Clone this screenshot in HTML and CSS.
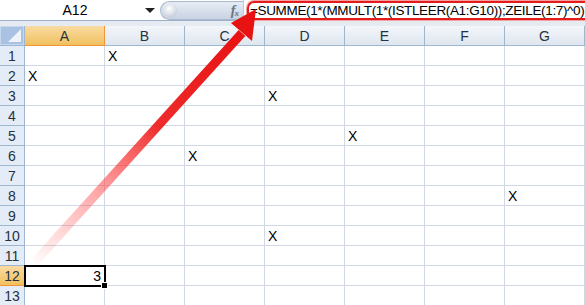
FILE: index.html
```html
<!DOCTYPE html>
<html>
<head>
<meta charset="utf-8">
<link rel="stylesheet" href="styles.css">
</head>
<body>
<div class="app">
  <div class="fbar">
    <div class="namebox"><span class="name">A12</span><span class="dd"></span></div>
    <div class="pill"><span class="knob"></span><span class="fx">f<sub>x</sub></span></div>
    <div class="formula"><span class="ftext">=SUMME(1*(MMULT(1*(ISTLEER(A1:G10));ZEILE(1:7)^0)</span></div>
  </div>
  <div class="sep"></div>
  <div class="sheet">
    <div class="corner"><span class="tri"></span></div>
    <div class="ch sel">A</div><div class="ch">B</div><div class="ch">C</div><div class="ch">D</div><div class="ch">E</div><div class="ch">F</div><div class="ch">G</div>

    <div class="rh">1</div><div class="c"></div><div class="c">X</div><div class="c"></div><div class="c"></div><div class="c"></div><div class="c"></div><div class="c"></div>
    <div class="rh">2</div><div class="c">X</div><div class="c"></div><div class="c"></div><div class="c"></div><div class="c"></div><div class="c"></div><div class="c"></div>
    <div class="rh">3</div><div class="c"></div><div class="c"></div><div class="c"></div><div class="c">X</div><div class="c"></div><div class="c"></div><div class="c"></div>
    <div class="rh">4</div><div class="c"></div><div class="c"></div><div class="c"></div><div class="c"></div><div class="c"></div><div class="c"></div><div class="c"></div>
    <div class="rh">5</div><div class="c"></div><div class="c"></div><div class="c"></div><div class="c"></div><div class="c">X</div><div class="c"></div><div class="c"></div>
    <div class="rh">6</div><div class="c"></div><div class="c"></div><div class="c">X</div><div class="c"></div><div class="c"></div><div class="c"></div><div class="c"></div>
    <div class="rh">7</div><div class="c"></div><div class="c"></div><div class="c"></div><div class="c"></div><div class="c"></div><div class="c"></div><div class="c"></div>
    <div class="rh">8</div><div class="c"></div><div class="c"></div><div class="c"></div><div class="c"></div><div class="c"></div><div class="c"></div><div class="c">X</div>
    <div class="rh">9</div><div class="c"></div><div class="c"></div><div class="c"></div><div class="c"></div><div class="c"></div><div class="c"></div><div class="c"></div>
    <div class="rh">10</div><div class="c"></div><div class="c"></div><div class="c"></div><div class="c">X</div><div class="c"></div><div class="c"></div><div class="c"></div>
    <div class="rh">11</div><div class="c"></div><div class="c"></div><div class="c"></div><div class="c"></div><div class="c"></div><div class="c"></div><div class="c"></div>
    <div class="rh sel">12</div><div class="c active">3<span class="handle"></span></div><div class="c"></div><div class="c"></div><div class="c"></div><div class="c"></div><div class="c"></div><div class="c"></div>
    <div class="rh">13</div><div class="c"></div><div class="c"></div><div class="c"></div><div class="c"></div><div class="c"></div><div class="c"></div><div class="c"></div>
  </div>
  <svg class="arrow" width="585" height="305" viewBox="0 0 585 305">
    <defs>
      <linearGradient id="g" gradientUnits="userSpaceOnUse" x1="32" y1="265" x2="242" y2="33">
        <stop offset="0" stop-color="#ff4040" stop-opacity="0"/>
        <stop offset="0.3" stop-color="#f44" stop-opacity="0.45"/>
        <stop offset="0.6" stop-color="#ee2020" stop-opacity="0.95"/>
        <stop offset="1" stop-color="#e81212" stop-opacity="1"/>
      </linearGradient>
    </defs>
    <line x1="32" y1="265" x2="242" y2="33" stroke="url(#g)" stroke-width="9" stroke-linecap="butt"/>
    <polygon points="256,9 252,41 231,23" fill="#e81212"/>
  </svg>
</div>
</body>
</html>
```

FILE: styles.css
```css
html, body {
  margin: 0;
  padding: 0;
  background: #fff;
}
.app {
  position: relative;
  width: 585px;
  height: 305px;
  overflow: hidden;
  font-family: "Liberation Sans", Arial, sans-serif;
  font-size: 13px;
  color: #000;
}
.fbar {
  display: flex;
  height: 20px;
  border-bottom: 1px solid #9cb0c9;
  background: #fff;
}
.namebox {
  flex: none;
  width: 160px;
  display: flex;
  align-items: center;
}
.name {
  flex: 1;
  text-align: center;
  font-size: 14px;
  padding-left: 5px;
}
.dd {
  width: 0;
  height: 0;
  border-left: 5px solid transparent;
  border-right: 5px solid transparent;
  border-top: 5px solid #222;
  margin-right: 5px;
}
.pill {
  flex: none;
  width: 83px;
  height: 19px;
  margin-top: 1px;
  border-radius: 10px 0 0 10px;
  background: linear-gradient(#e6ecf4, #c8d3e2);
  border: 1px solid #a9b8cc;
  border-right: none;
  box-sizing: border-box;
  display: flex;
  align-items: center;
  justify-content: space-between;
  padding: 0 5px 0 3px;
}
.knob {
  width: 13px;
  height: 13px;
  border-radius: 50%;
  background: radial-gradient(circle at 40% 35%, #ffffff, #d5dbe4 60%, #a8b3c2);
}
.fx {
  font-family: "Liberation Serif", serif;
  font-style: italic;
  font-weight: bold;
  font-size: 14px;
  color: #6a7585;
  letter-spacing: -1px;
}
.fx sub {
  font-size: 9px;
  vertical-align: -1px;
}
.formula {
  flex: 1;
  min-width: 0;
  display: flex;
  align-items: center;
  padding-left: 3px;
  border-left: 1px solid #c0cbd9;
}
.ftext {
  display: block;
  white-space: nowrap;
  border: 2px solid #e31b1b;
  border-right: none;
  border-radius: 7px 0 0 7px;
  height: 15px;
  line-height: 15px;
  padding: 0 10px 0 1px;
  margin-top: 1px;
  font-size: 13.5px;
  letter-spacing: -0.35px;
  box-shadow: 0 0 0 1px #f4a0a0;
}
.sep {
  height: 5px;
  background: #e6ebf2;
}
.sheet {
  display: grid;
  grid-template-columns: 25px repeat(7, 80px);
  grid-auto-rows: 20px;
}
.corner {
  background: #a9c1e3;
  border-right: 1px solid #9eb6ce;
  border-bottom: 1px solid #9eb6ce;
  position: relative;
  box-shadow: inset 0 0 0 1px #c7d8ee;
}
.tri {
  position: absolute;
  right: 3px;
  bottom: 3px;
  width: 0;
  height: 0;
  border-left: 13px solid transparent;
  border-bottom: 13px solid #eef3fa;
}
.ch {
  background: linear-gradient(#f3f6fa, #dfe6ef);
  border-right: 1px solid #9eb6ce;
  border-bottom: 1px solid #9eb6ce;
  display: flex;
  align-items: center;
  justify-content: center;
  color: #27323e;
  font-size: 14px;
}
.ch.sel, .rh.sel {
  background: linear-gradient(#f9dba2, #f1c15f);
  border-color: #f29536;
}
.rh {
  background: #e4ecf7;
  border-right: 1px solid #9eb6ce;
  border-bottom: 1px solid #9eb6ce;
  display: flex;
  align-items: center;
  justify-content: center;
  color: #27323e;
  font-size: 14px;
}
.c {
  border-right: 1px solid #d0d7e5;
  border-bottom: 1px solid #d0d7e5;
  display: flex;
  align-items: center;
  padding-left: 3px;
  font-size: 14px;
}
.c.active {
  position: relative;
  justify-content: flex-end;
  padding: 0 3px 0 0;
  outline: 2px solid #000;
  outline-offset: -1px;
  z-index: 1;
}
.handle {
  position: absolute;
  right: -4px;
  bottom: -4px;
  width: 5px;
  height: 5px;
  background: #000;
  border: 1px solid #fff;
}
.arrow {
  position: absolute;
  left: 0;
  top: 0;
  pointer-events: none;
}
```
